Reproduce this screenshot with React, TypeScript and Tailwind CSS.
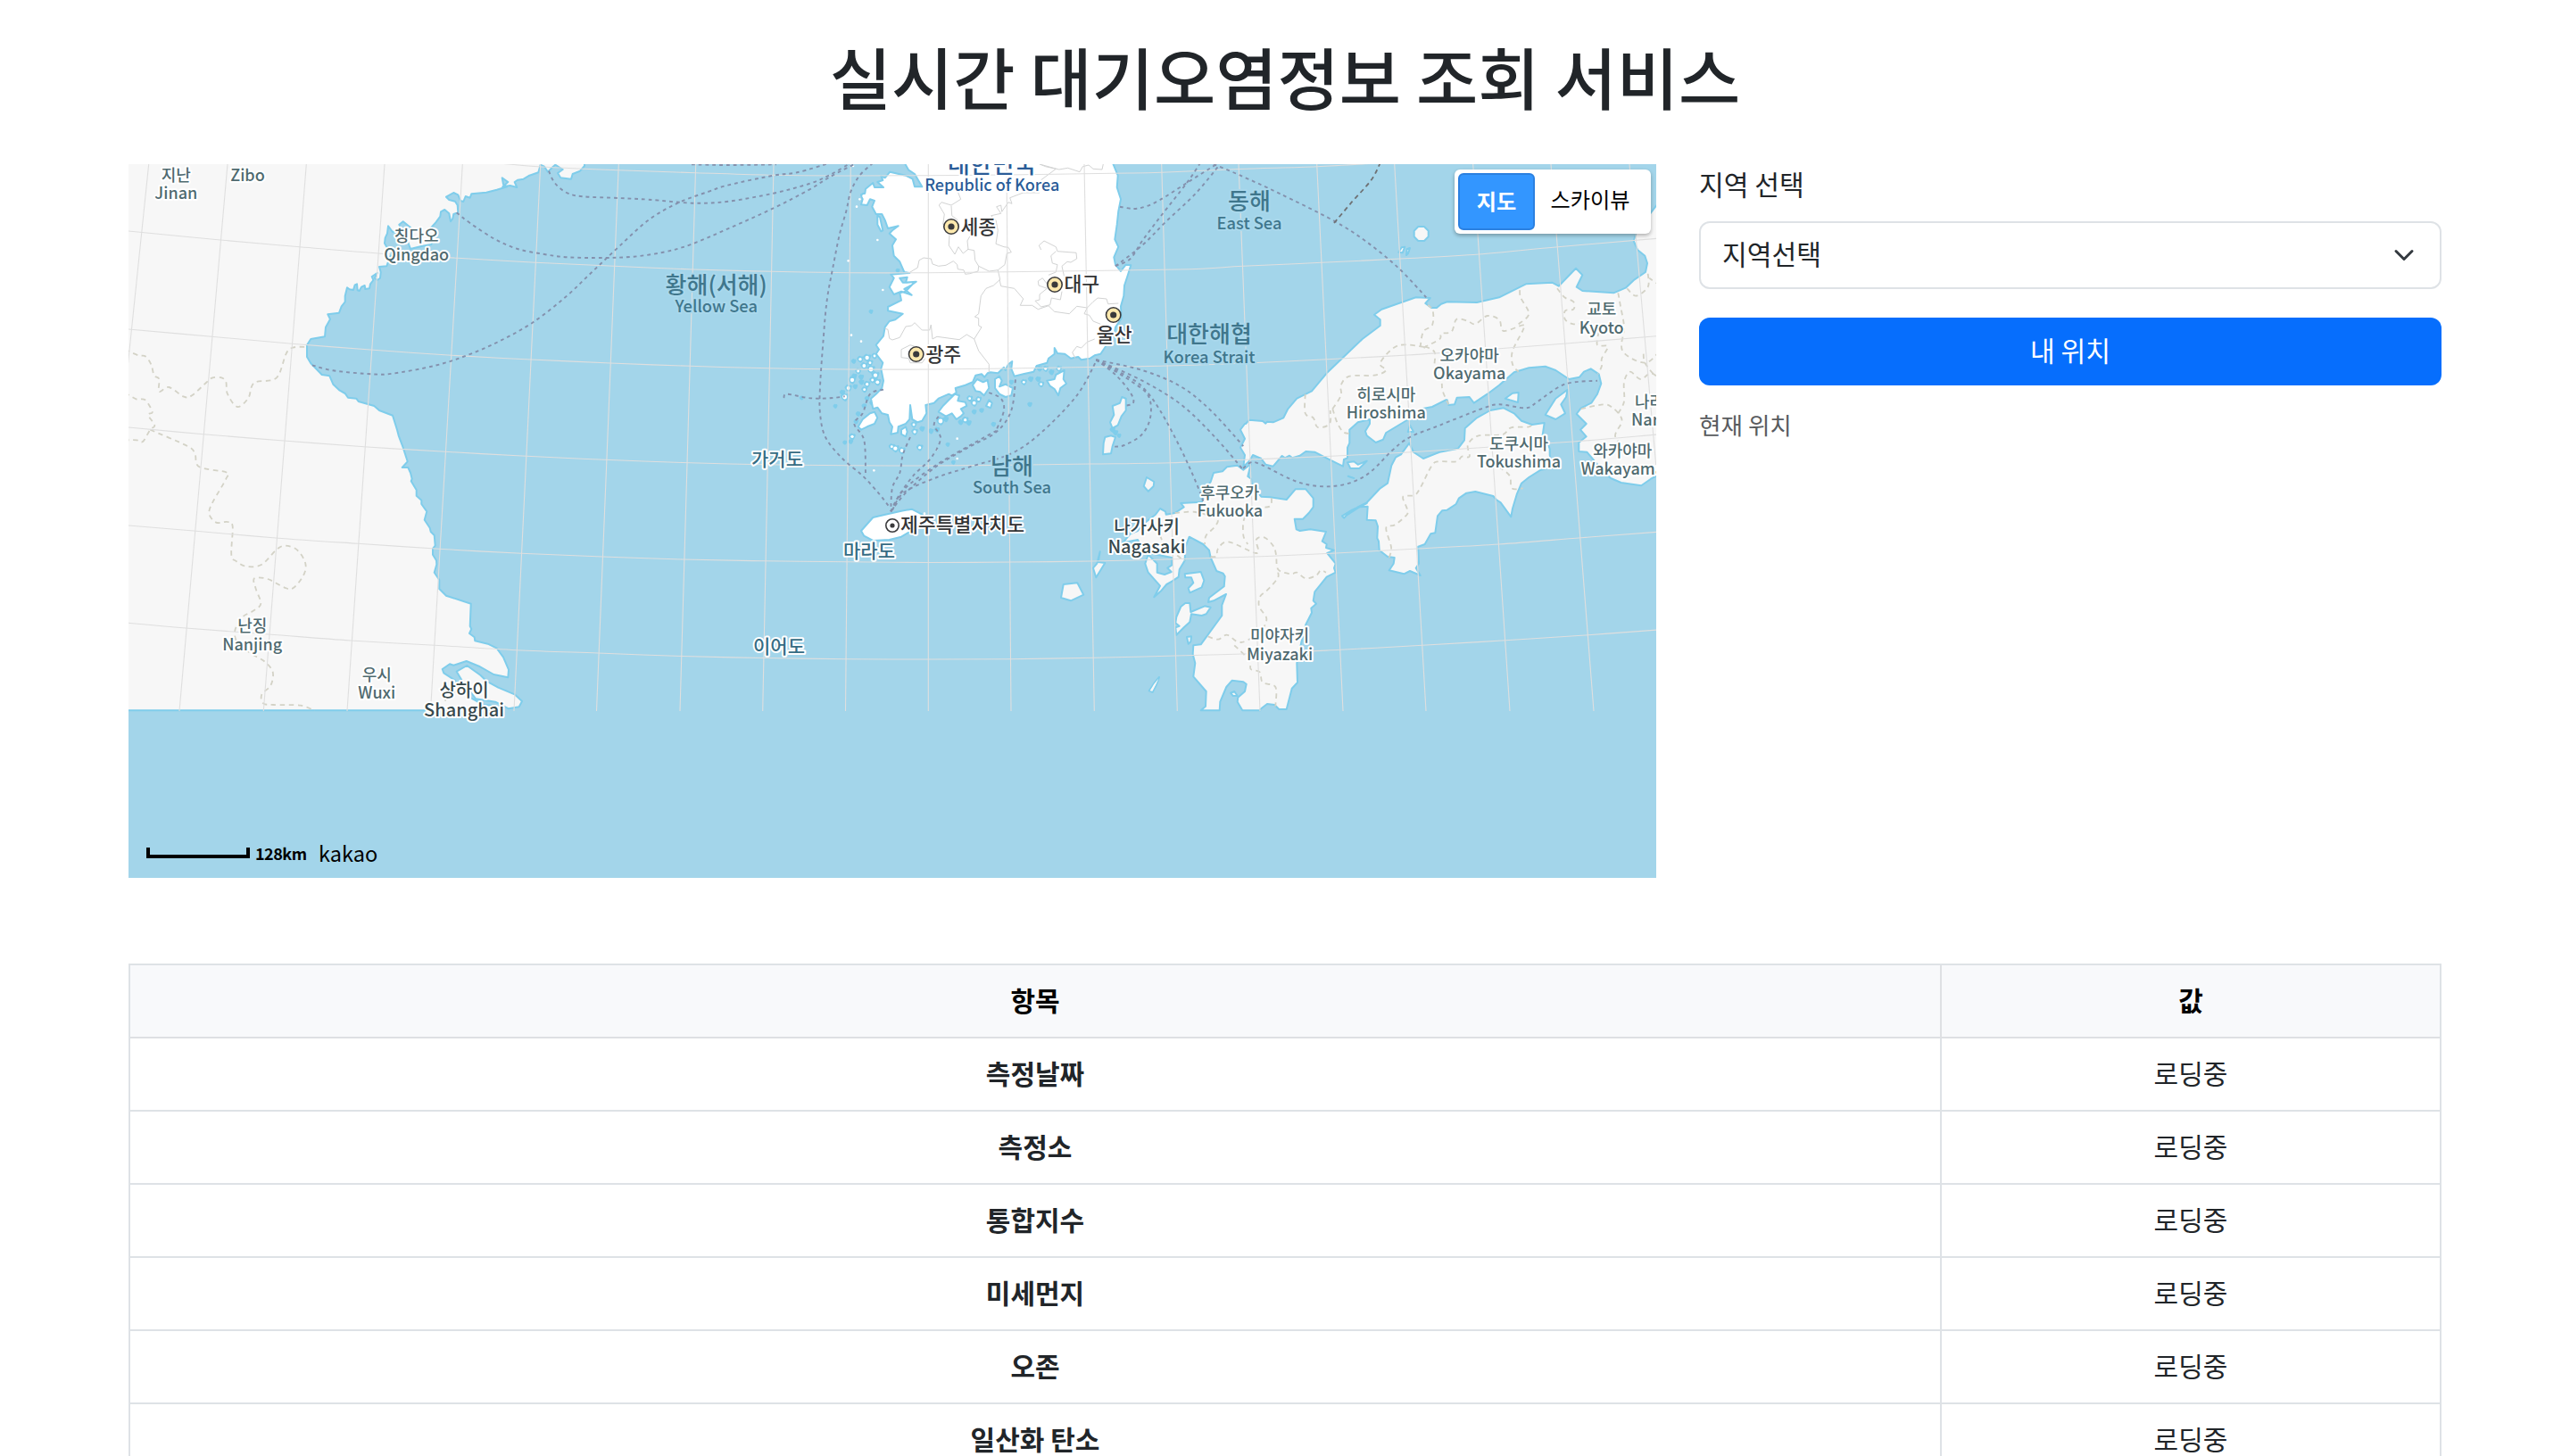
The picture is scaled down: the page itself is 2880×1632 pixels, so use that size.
import React from "react";

type Seg = [keyof typeof ORIGINS, string];
type Pt = [number, number];

// Origin of each map tile. Tile coordinates are stored at three units per pixel.
const ORIGINS = {
  A: [140, 180],
  B: [140, 560],
  C: [560, 180],
  D: [900, 180],
  E: [1280, 180],
  F: [1380, 460],
  G: [1480, 180],
  H: [1180, 560],
} as const;

const toPoints = (segs: Seg[]): Pt[] =>
  segs.flatMap(([tile, s]) => {
    const [ox, oy] = ORIGINS[tile];
    return s
      .trim()
      .split(/\s+/)
      .map((p) => {
        const [x, y] = p.split(",").map(Number);
        return [ox + x / 3, oy + y / 3] as Pt;
      });
  });

const f = (n: number) => n.toFixed(1);
const poly = (...segs: Seg[]) => toPoints(segs).map(([x, y]) => `${f(x)},${f(y)}`).join(" ");

const smoothPts = (p: Pt[]) => {
  let d = `M${f(p[0][0])} ${f(p[0][1])}`;
  for (let i = 0; i < p.length - 1; i++) {
    const a = p[i - 1] ?? p[i];
    const b = p[i];
    const c = p[i + 1];
    const e = p[i + 2] ?? c;
    d += `C${f(b[0] + (c[0] - a[0]) / 6)} ${f(b[1] + (c[1] - a[1]) / 6)} ${f(c[0] - (e[0] - b[0]) / 6)} ${f(c[1] - (e[1] - b[1]) / 6)} ${f(c[0])} ${f(c[1])}`;
  }
  return d;
};
const smooth = (...segs: Seg[]) => smoothPts(toPoints(segs));

const FOREIGN_LAND = [
  poly(
    ["C", "285,6 285,18 270,35 245,45 240,62 205,58 195,42 212,30 187,14 178,22 162,38 150,20 137,14 130,40 100,50 80,62 60,65 50,72 58,90 35,84 10,88 28,72 8,58 12,80"],
    ["A", "1285,88 1250,98 1215,107 1165,112 1160,125 1145,120 1138,138 1128,135 1120,115 1105,108 1080,122 1090,132 1110,137 1118,150 1120,175 1105,180 1102,195 1095,205 1090,178 1075,165 1062,172 1060,188 1045,208 1030,225 1045,240 1030,282 1000,287 960,297 950,270 960,225 935,205 922,215 930,235 900,240 885,220 882,245 875,260 873,278 880,290 900,300 885,340 880,355 855,357 860,375 858,395 848,402 840,395 848,378 830,390 835,402 825,415 822,430 808,432 806,420 795,425 788,438 782,436 780,415 773,418 768,435 755,433 747,427 740,455 740,475 728,490 720,512 682,517 690,533 675,560 672,592 625,600 612,620 612,660 625,682 662,720 688,724 700,752 722,773 740,783 750,797 778,800 785,810 838,825 855,840 900,857 915,905 920,925 935,965 950,1012 932,1032 952,1032 960,1050 965,1070 962,1078 980,1108 980,1127 997,1142"],
    ["B", "997,15 1015,40 1007,68 1025,95 1028,108 1040,120 1043,155 1035,165 1035,185 1047,205 1048,218 1040,245 1057,270 1057,300 1080,323 1163,350 1160,425 1165,435 1158,450 1175,463 1177,475 1220,485 1250,500 1272,530 1290,572 1288,598 1240,588 1190,560 1148,543 1105,557 1092,553 1067,570 1072,583 1110,608 1165,668 1205,690 1230,692 1230,709 0,709 0,-1160"],
  ),
  poly(["B", "1150,558 1195,590 1215,610 1255,632 1310,655 1335,678 1325,697 1290,703 1245,680 1180,670 1140,620 1115,578"]),
  poly(
    ["E", "345,885 330,905 345,935 330,965 345,990 340,1030 360,1010 372,990 400,1002 415,1022 440,1028 470,993 480,1000 495,992 505,1000 530,992 550,978 580,980 625,1003 675,1028 678,1005 690,1000 690,965 697,950 697,905 725,880 765,870 765,885 750,910 755,925 785,948 810,938 820,915 895,870 940,835 975,828 1020,805"],
    ["G", "425,805 430,822 450,820 458,797 500,795 515,815 560,785 600,755 650,712 700,697 755,692 790,705 835,735 870,728 885,710 908,700 935,718 943,750 930,785 910,815 875,832 860,852 893,885 873,905 893,928 868,948 868,978 895,980"],
    ["F", "1225,175 1245,200 1275,228 1310,243 1378,253 1410,230 1440,215"],
    ["G", "1145,850 1145,130 1110,175 1060,245 1052,270 1065,300 1090,320 1098,345 1092,375 1055,400 1025,428 985,445 880,438 860,425 880,385 858,362 800,422 778,410 690,415 600,460 525,477 425,475 405,482 390,495 372,495 352,480 368,462 320,460 205,500 180,518 200,535 200,555 140,600 20,715"],
    ["E", "570,775 520,800 490,835 475,865 440,880 420,878 415,884 405,876 360,872 348,885"],
  ),
  poly(
    ["F", "598,110 570,148 552,158 538,185 525,245 500,262 455,310 425,325 458,323 455,368 485,370 492,390 490,430 495,440 497,470 525,492 548,495 545,515 530,538 580,550 600,540 635,555 620,530 630,515 628,458 650,450 670,415 685,412 693,355 708,337 725,335 755,315 765,295 790,278 820,273 880,288 890,300 905,310 940,358 945,330 960,280 975,245 1000,225 1040,200 1080,190 1070,150 1070,130 1060,100 1045,90 1052,42 1010,48 975,35 950,10 915,-8 870,0 825,25 785,60 783,100 762,128 700,140 645,162 612,140"],
  ),
  poly(["F", "455,312 405,335 372,355 378,362 388,352 425,328"]),
  poly(
    ["E", "230,1080 240,1050 270,1045 285,1030 320,1025 340,1040 365,1020 355,1062 366,1070 370,1095 400,1130 430,1132 485,1140 515,1105 550,1105 575,1135 575,1165 560,1185 540,1205 512,1205 518,1240 530,1245 565,1240 618,1248 605,1280 620,1290 618,1302 645,1310 622,1320 650,1355"],
    ["F", "345,530 350,545 320,560 280,610 275,640 285,650 268,665 270,680 250,720 235,780 220,850 222,915 203,935 185,1005 160,1005 145,990 120,987 97,1005"],
    ["H", "697,709 637,709 620,680 622,665 645,645 650,620 640,613 602,608 583,630 562,680 560,709 497,709 513,695 515,645 472,595 478,550 470,520 472,490 497,487 568,390 568,355 582,318 540,340 522,345 525,330 575,292 578,258 572,248 550,240 530,195 525,170 505,150 458,125 445,160 443,205 425,235 422,260 400,275 382,285 365,305 340,328 360,290 320,245 310,215 320,185 350,215 350,245 375,252 398,243 385,230 400,220 400,195 350,185 300,170 285,135 235,145 260,115 285,105 300,85 345,50 360,30 378,40 380,50 410,45 440,25 430,12 500,8"],
    ["E", "205,1138 195,1120"],
  ),
  poly(["G", "755,855 790,800 830,770 825,795 808,820 822,850 790,870"]),
  poly(["G", "620,800 645,782 665,780 663,813 635,805"]),
  poly(["G", "300,890 312,912 293,912"]),
  poly(["E", "690,1015 712,1012 725,1022 755,1010 730,1035 700,1035"]),
  poly(["E", "692,1061 712,1068 700,1064"]),
  poly(["H", "443,250 480,245 497,243 508,272 500,295 460,313 455,298 472,280 465,262 445,262"]),
  poly(["H", "430,360 445,348 460,348 463,378 510,358 530,362 515,385 500,390 465,385 460,412 440,430 415,455 412,430 425,425 412,415 415,395"]),
  poly(["H", "450,462 465,460 463,478 455,485"]),
  poly(["H", "35,285 82,280 103,320 60,340 27,330"]),
  poly(["H", "158,175 152,210 175,213 145,262 135,230 148,215"]),
  poly(["H", "357,597 348,622 335,647 323,643 338,620"]),
  poly(["H", "597,650 610,645 620,660 605,660"]),
  poly(["D", "1040,825 1065,815 1072,795 1085,800 1085,840 1070,860 1058,890 1040,900 1032,880 1045,855"]),
  poly(["D", "1015,930 1035,925 1050,930 1040,960 1035,985 1008,988 1010,950"]),
  poly(["D", "1155,1065 1180,1080 1178,1095 1160,1112 1145,1095"]),
  poly(["E", "928,222 948,222 962,236 962,256 948,270 928,270 914,256 914,236"]),
  poly(["E", "862,308 872,292 883,290 875,310"]),
  poly(["E", "888,318 890,298 900,294 894,312"]),
];

const KOREA_LAND = [
  poly(
    ["D", "340,6 355,32 375,45 385,62 400,88 375,88 368,62 345,50 292,38 275,58 262,52 268,66 250,72 270,90 240,90 235,75 210,95 208,110 195,115 200,130 195,148 215,150 225,130 240,135 232,155 245,180 265,180 275,200 285,228 320,220 300,235 290,245 312,265 300,285 305,320 325,340 340,375 358,378 295,383 305,395 290,425 305,450 330,440 365,452 340,432 362,420 380,407 335,410 325,395 350,392 345,410 375,408 345,440 325,445 330,470 285,492 285,505 335,515 310,535 290,540 275,560 270,590 245,620 255,635 245,650 268,680 262,700 270,740 265,765 245,785 228,800 235,835 250,830 265,850 285,855 290,880 300,895 295,920 318,915 320,895 345,885 358,870 360,822 367,870 385,880 400,875 415,850 412,822 440,815 455,800 490,785 500,790 515,780 512,765 545,755 570,745 580,722 600,718 610,728 620,715 630,712 655,715 675,695 680,705 690,685 703,675 700,700 710,725 740,718 775,710 785,690 820,680 825,665 845,650 845,630 855,648 880,650 900,665 925,660 935,670 965,665 980,655 1000,650 1010,635 1020,620 1045,590 1050,560 1070,530 1068,490 1078,455 1080,420 1090,390 1102,352 1085,350 1068,372 1050,350 1045,325 1060,290 1048,265 1055,215 1060,170 1068,130 1055,90 1058,50 1040,6"],
  ),
  poly(["D", "195,1245 235,1200 270,1192 330,1178 365,1172 400,1190 405,1215 380,1235 330,1265 290,1275 235,1278 205,1262"]),
  poly(["D", "185,895 200,870 225,850 240,845 250,865 240,885 215,895 195,905"]),
  poly(["D", "455,845 470,825 490,805 510,785 525,790 520,808 545,812 550,825 530,835 540,850 530,860 515,870 500,850 480,860"]),
  poly(["D", "570,755 585,735 605,745 620,738 625,765 608,790 595,778 580,775"]),
  poly(["D", "645,735 660,725 668,740 660,760 680,752 705,765 700,790 680,795 660,785 645,765"]),
  poly(["D", "820,740 845,735 850,720 878,705 875,735 885,750 865,765 858,790 845,768 830,758"]),
  poly(["D", "250,185 258,190 268,235 262,238 250,215"]),
  poly(["D", "330,905 345,895 350,912 345,928 330,920"]),
  poly(["D", "615,825 625,805 635,815 630,832"]),
];

// [x, y, radius] of the islets along the south-west coast, in tile D units.
const ISLETS: [number, number, number][] = [
  [215, 663, 9], [240, 657, 6], [192, 668, 7], [170, 675, 4], [205, 690, 8], [228, 702, 10], [185, 708, 6], [243, 722, 9],
  [165, 738, 9], [152, 765, 8], [140, 795, 10], [132, 780, 5], [196, 745, 5], [215, 752, 7], [250, 745, 8], [206, 770, 6],
  [233, 738, 6], [175, 760, 4], [178, 878, 4], [185, 852, 4], [165, 928, 7], [140, 948, 3], [160, 945, 4], [205, 825, 4],
  [375, 912, 7], [372, 888, 6], [392, 965, 7], [310, 968, 9], [332, 975, 8], [298, 962, 6], [400, 902, 5], [430, 910, 5], [462, 876, 10],
  [480, 870, 5], [545, 872, 7], [557, 882, 5], [640, 887, 4], [560, 800, 6], [575, 815, 8], [600, 840, 4], [742, 745, 6],
  [765, 735, 5], [800, 752, 6], [790, 735, 5], [762, 820, 4], [486, 955, 3], [505, 1015, 3], [575, 845, 4], [590, 803, 6], [815, 700, 6],
  [835, 712, 5], [795, 700, 5], [700, 745, 4], [860, 700, 6], [450, 905, 5], [232, 815, 5], [215, 800, 4], [228, 508, 3],
  [318, 370, 3], [108, 826, 3], [-5, 798, 3], [195, 728, 5], [225, 680, 6], [172, 725, 5], [1050, 915, 5], [1040, 905, 5], [1062, 925, 3], [530, 880, 5], [205, 120, 8],
];

const SPECKS: [number, number][] = [
  [180, 155], [190, 130], [250, 267], [152, 337], [162, 587], [195, 608], [268, 435], [238, 1042], [518, 935], [518, 1002], [448, 972], [408, 1187], [168, 18],
];

const PROVINCES_KR = [
  "485,95 518,100 530,130 498,150 465,140 457,150 475,180 470,215",
  "498,152 500,185 520,200",
  "492,250 490,285 510,315 522,290 538,312 555,298 552,270 560,255",
  "552,298 575,302 578,335 590,355 588,372 560,380 545,382 540,368 520,365 518,350 505,338 480,352 455,355 435,348 430,330 405,327 390,335 385,360 355,378",
  "590,355 625,372 655,368 678,350 685,312 700,308 690,292 675,290 648,280 655,235 648,200 632,185 665,178 650,155 665,150 668,172 690,140 702,145 695,125 740,108 795,108",
  "655,368 662,400 640,420 615,430 598,455 590,515 577,525 590,530 590,555 600,560 575,600 550,585 525,602 450,592 435,600 430,552 425,570 400,570 375,545 365,555 345,558 325,595 300,603 290,598 285,568 275,565",
  "575,600 590,640 625,685 625,712",
  "660,400 665,422 710,430 740,465 730,487 770,487 790,500 825,488 845,508 895,515 920,490 955,495 975,475 990,462 1020,465 1025,482 1060,480",
  "800,300 793,285 810,270 850,290 855,305 918,310 920,330 900,342 888,340 870,355 880,400",
  "850,305 833,320 838,345 855,350 850,375 825,385",
  "820,415 805,395 790,405 792,420 820,430 795,450 795,468 780,472 800,492 830,485 835,462 865,468 870,440",
  "955,495 945,515 962,520 975,540 1000,550",
  "980,600 955,610 935,630 920,625 905,645 915,665",
  "375,625 360,620 330,635 330,662 355,665 360,680 400,680 410,665",
  "800,65 850,28 815,20 795,12 860,30 890,25 930,38 940,20 960,15 975,28 1005,30 1010,6",
].map((s) => poly(["D", s]));

const BORDERS: string[] = [
  smooth(["A", "0,635 45,655 68,658 88,685 98,722 115,735 115,777 148,762 198,794 225,790 275,745 295,730 325,730 340,745 345,785 378,828 415,798 435,747 510,730 550,637 615,627"]),
  smooth(["A", "0,780 38,802 68,805 92,845 78,855 100,890 85,905 60,945 40,940 0,940"]),
  smooth(
    ["A", "85,905 210,960 235,985 250,1030 340,1048 340,1070 297,1145"],
    ["B", "283,40 290,62 310,78 345,75 362,90 358,185 375,208 410,225 460,218 510,168 540,155 580,170 607,215 600,255 565,298 535,295 480,267 435,265 440,300 457,350 430,375 395,395 370,440 378,480 420,515 470,545 497,580 490,625 460,655 465,685 500,690 590,692 638,710"],
  ),
  smooth(["B", "1110,645 1080,670 1075,690"]),
  smooth(["E", "548,785 548,850 575,865 590,897 630,885 632,840"]),
  smooth(["E", "640,835 655,880 675,912 697,918"]),
  smooth(
    ["E", "640,835 668,790 668,755 697,725 780,722 820,705 800,680 860,622 950,627"],
    ["G", "350,627 400,600 405,582 440,575 457,533 495,540 520,550 560,522 600,535 615,573 680,553 680,570 645,640 645,685 665,710"],
  ),
  smooth(["G", "665,550 700,515 672,460 670,430"]),
  smooth(["G", "360,485 377,505 375,553 345,575 335,625"]),
  smooth(["G", "350,625 383,645 383,700 405,740 410,775 430,820"]),
  smooth(["G", "795,430 820,460 850,475 850,500 822,505 822,535 850,550 885,545"]),
  smooth(["G", "1000,445 1008,490 1020,560 1015,640 1090,680 1140,640"]),
  smooth(["G", "935,575 930,620 965,625 945,665 945,690 932,718"]),
  smooth(["G", "875,835 950,820 980,830 1005,855 1012,880 990,925 1015,960 1040,970"]),
  smooth(["G", "1100,380 1100,425 1060,455 1030,430"]),
  smooth(["G", "1000,850 1020,810 1020,745 1040,710 1075,735 1110,715 1140,735"]),
  smooth(["G", "1085,650 1090,680 1120,720"]),
  smooth(["G", "1140,420 1105,395"]),
  smooth(["F", "530,495 537,460 520,395 550,385 590,350 590,330 577,290 615,285 635,260 672,188 695,172 755,172 775,155 800,155 795,115 830,85 910,82 940,58 1000,55 1010,45"]),
  smooth(["F", "900,190 935,220 943,262 980,262"]),
  smooth(["H", "410,45 480,42 550,65 545,90 515,120 510,150"]),
  smooth(["H", "735,-5 730,22 690,30 645,60 640,120 655,150"]),
  smooth(["H", "530,192 550,190 555,165 590,142 685,180 683,135 710,127 740,155 750,185 757,235 800,250 820,245 850,265 885,255 900,238 918,245"]),
  smooth(["H", "757,245 755,265 720,305 697,325 693,360 718,400 700,440 650,475 620,478 585,455 555,470 520,460"]),
  smooth(["H", "610,490 660,540 665,570 695,580 705,615 748,630 748,695"]),
  smooth(["H", "360,120 375,150 420,190 445,205"]),
];

const ROUTES: string[] = [
  smooth(["C", "-145,175 -100,210 -20,262 60,297 150,315 230,325 350,327 450,323 550,308 640,283 770,228 920,160 1040,98 1110,55 1200,8"]),
  smooth(["C", "-630,688 -560,706 -430,718 -360,716 -220,690 -110,655 0,607 110,545 220,460 310,375 400,290 500,200 600,142 700,105 770,82 920,50 1000,40 1110,8"]),
  smooth(["C", "165,35 185,75 225,108 280,121 400,126 500,131 650,143 770,137 920,110 1040,78 1110,48 1180,8"]),
  smooth(["C", "645,13 770,15 930,13"]),
  smooth(["D", "235,8 190,50 160,105 145,170 122,250 100,360 80,470 68,600 57,760 57,850 75,930 130,1000 200,1060 255,1120 290,1165"]),
  smooth(["C", "955,798 965,785 1030,797 1075,800 1120,798 1160,793"]),
  smooth(["D", "270,770 225,785 200,850 172,885 205,940 210,1050"]),
  smooth(["D", "360,930 335,990 325,1050 300,1100 295,1180"]),
  smooth(["D", "455,860 440,890 462,935 430,1000 370,1060 320,1130 295,1180"]),
  smooth(["D", "295,1180 350,1112 450,1027 560,962 650,912 700,840 715,725"]),
  smooth(["D", "295,1180 340,1105 450,1022 560,958 650,908"]),
  smooth(["D", "625,780 665,800 675,840 650,905"]),
  smooth(["D", "300,1175 340,1115 450,1065 560,1030 700,985 800,915 920,790 985,675"]),
  smooth(["D", "985,670 1050,720 1100,780 1110,815 1080,825"]),
  smooth(["D", "985,670 1100,740 1160,790 1168,860 1140,920 1080,957 1040,962"]),
  smooth(["E", "-155,670 -60,720 0,760 60,840 130,970 180,1080 205,1145"]),
  smooth(["E", "-155,670 0,740 130,820 240,925 340,1040"]),
  smooth(["E", "-155,670 0,705 130,760 230,840 340,960"]),
  smooth(
    ["E", "340,1035 365,1015 400,1022 500,1072 570,1092 640,1095 710,1080 770,1045 840,975 900,930 1000,890 1140,835"],
    ["G", "600,820 690,832 730,810 820,752 930,740"],
  ),
  smooth(["E", "-75,155 -30,162 10,155 60,132 150,75 250,12"]),
  smooth(["E", "-90,355 -40,330 0,270 60,190 150,75 195,8"]),
  smooth(["E", "-90,355 0,285 80,205 180,110 260,14"]),
  smooth(["E", "240,12 330,50 460,110 640,200 750,270 860,360 955,460"]),
];

const MERIDIANS: [number, number][] = [
  [166.7, 103], [255, 201], [343.3, 295.3], [431, 389], [518.3, 482.5], [605.7, 576], [693.3, 668.5], [779.7, 762], [867, 854.7],
  [953.3, 947.5], [1040.3, 1040.3], [1128, 1133], [1215, 1226.3], [1301.7, 1319.3], [1388, 1412], [1475.7, 1505], [1562.7, 1598],
  [1650.7, 1692], [1738, 1786], [1826, 1880],
];

const PARALLELS: Pt[][] = [
  [[560, 183], [607, 187], [693, 190.7], [780, 193.7], [867, 196.3], [953, 197], [1040, 196.7], [1128, 196], [1247, 194.3], [1302, 193.3], [1388, 189.5], [1476, 186.7], [1560, 182]],
  [[144, 259], [247, 269], [336, 276.7], [424, 284], [513, 289.3], [600, 294.3], [688, 298.3], [777, 302], [865, 304.3], [953, 305.7], [1040, 305.7], [1129, 304.7], [1320, 302], [1393, 298.3], [1481, 294.3], [1569, 290], [1657, 285], [1746, 276.7], [1857, 267.3]],
  [[144, 369], [237, 377.3], [327, 385.3], [415, 392], [506, 398.3], [595, 403], [684, 407], [773, 410.3], [862, 412.7], [952, 414], [1040, 414], [1130, 413], [1218, 411.5], [1308, 410], [1398, 407], [1487, 402.7], [1577, 398], [1667, 391.7], [1755, 385], [1857, 376.7]],
  [[144, 479], [228, 486.7], [318, 494], [408, 500.7], [499, 506.3], [580, 510.7], [671, 515], [765, 518.5], [857, 520.8], [950, 521.7], [1040, 522], [1131, 521.3], [1222, 520], [1312, 518.7], [1402, 515], [1492, 511.3], [1582, 506.7], [1671, 501], [1763, 495], [1857, 487]],
  [[144, 589], [217, 595], [309, 603], [401, 609.3], [492, 615.3], [584, 620.3], [675, 624], [765, 627], [857, 628.8], [950, 629.8], [1040, 630.5], [1132, 630], [1223, 629], [1315, 626.7], [1406, 624], [1497, 620], [1589, 615], [1680, 610], [1772, 602.7], [1857, 596.3]],
  [[144, 698.3], [208, 704], [301, 711], [393, 718], [487, 723.3], [579, 728.7], [670, 732], [765, 735.5], [857, 737.5], [950, 738.8], [1040, 739], [1132, 738.7], [1226, 737.3], [1317, 735], [1410, 732.5], [1502, 728.3], [1594, 723.3], [1687, 717.7], [1780, 711.7], [1857, 706]],
];

type Label = { x: number; y?: number; ko?: string; ey?: number; en?: string };

const CITIES: Label[] = [
  { x: 197.3, y: 203, ko: "지난", ey: 222.5, en: "Jinan" },
  { x: 277.5, ey: 202.8, en: "Zibo" },
  { x: 466.7, y: 271.3, ko: "칭다오", ey: 291.5, en: "Qingdao" },
  { x: 282.7, y: 708, ko: "난징", ey: 728.5, en: "Nanjing" },
  { x: 422.3, y: 763, ko: "우시", ey: 783, en: "Wuxi" },
  { x: 1378.3, y: 558.5, ko: "후쿠오카", ey: 578.7, en: "Fukuoka" },
  { x: 1553.3, y: 449, ko: "히로시마", ey: 469, en: "Hiroshima" },
  { x: 1646.7, y: 405, ko: "오카야마", ey: 425, en: "Okayama" },
  { x: 1794.7, y: 352.7, ko: "교토", ey: 373.7, en: "Kyoto" },
  { x: 1702, y: 504, ko: "도쿠시마", ey: 524, en: "Tokushima" },
  { x: 1818.3, y: 512.3, ko: "와카야마", ey: 532.3, en: "Wakayama" },
  { x: 1848.5, y: 457, ko: "나라", ey: 477.3, en: "Nara" },
  { x: 1434, y: 719, ko: "미야자키", ey: 740, en: "Miyazaki" },
];

const BIG_CITIES: Label[] = [
  { x: 520, y: 781, ko: "상하이", ey: 803, en: "Shanghai" },
  { x: 1285, y: 598, ko: "나가사키", ey: 620, en: "Nagasaki" },
];

const SEAS: Label[] = [
  { x: 802.7, y: 328.5, ko: "황해(서해)", ey: 350, en: "Yellow Sea" },
  { x: 1400, y: 235, ko: "동해", ey: 256.5, en: "East Sea" },
  { x: 1355, y: 384.3, ko: "대한해협", ey: 406.5, en: "Korea Strait" },
  { x: 1134, y: 532, ko: "남해", ey: 553.3, en: "South Sea" },
];

const ISLANDS: Label[] = [
  { x: 974, y: 625, ko: "마라도" },
  { x: 871, y: 521.5, ko: "가거도" },
  { x: 873, y: 731.5, ko: "이어도" },
];

const MARKERS: { cx: number; cy: number; x: number; y: number; name: string; middle?: boolean; plain?: boolean }[] = [
  { cx: 1066, cy: 254, x: 1076.5, y: 261.5, name: "세종" },
  { cx: 1182, cy: 319, x: 1192.5, y: 326.3, name: "대구" },
  { cx: 1247.7, cy: 353, x: 1248.7, y: 382.8, name: "울산", middle: true },
  { cx: 1026.7, cy: 397, x: 1037.5, y: 404.7, name: "광주" },
  { cx: 1000, cy: 589, x: 1009, y: 596, name: "제주특별자치도", plain: true },
];

function Labels({ items, koSize, enSize, fill, halo }: { items: Label[]; koSize: number; enSize: number; fill: string; halo: string }) {
  return (
    <g fill={fill} stroke={halo} strokeWidth={4} strokeLinejoin="round" paintOrder="stroke" textAnchor="middle">
      {items.map((l) => (
        <g key={l.en ?? l.ko}>
          {l.ko && <text x={l.x} y={l.y} fontSize={koSize}>{l.ko}</text>}
          {l.en && <text x={l.x} y={l.ey} fontSize={enSize}>{l.en}</text>}
        </g>
      ))}
    </g>
  );
}

function MapDrawing() {
  return (
    <svg className="block h-full w-full font-medium" viewBox="144 184 1712 800" aria-label="지도">
      <g strokeLinejoin="round" stroke="#7fcdeb" strokeWidth={2}>
        <g fill="#f7f7f7">{FOREIGN_LAND.map((p) => <polygon key={p} points={p} />)}</g>
        <g strokeWidth={3}>
          {ISLETS.map(([x, y, r]) => {
            const d = `${x - r},${y - r * 0.3} ${x - r * 0.3},${y - r} ${x + r * 0.2},${y - r * 0.5} ${x + r},${y - r * 0.7} ${x + r * 0.6},${y + r * 0.4} ${x + r * 0.2},${y + r} ${x - r * 0.5},${y + r * 0.5}`;
            return <polygon key={d} points={poly(["D", d])} fill="#fff" />;
          })}
        </g>
        <g fill="#fff">{KOREA_LAND.map((p) => <polygon key={p} points={p} />)}</g>
      </g>
      <g fill="#fff">
        {SPECKS.map(([x, y]) => <circle key={`${x}-${y}`} cx={900 + x / 3} cy={180 + y / 3} r={1.3} />)}
        {ISLETS.filter(([, , r]) => r > 5).map(([x, y, r]) => (
          <circle key={`${x}-${y}`} cx={900 + x / 3} cy={180 + y / 3} r={r / 4.2} />
        ))}
        <polygon points={poly(["H", "355,602 346,622 334,644 326,643 340,620"])} fill="#f7f7f7" />
      </g>
      <g fill="none" stroke="#d2d3d3" strokeWidth={1}>{PROVINCES_KR.map((p) => <polyline key={p} points={p} />)}</g>
      <g fill="none" stroke="#d3d2c6" strokeWidth={1.8} strokeDasharray="5.5 4.5">{BORDERS.map((d) => <path key={d} d={d} />)}</g>
      <g fill="none" stroke="#dfdfdf" strokeWidth={1.1}>
        {MERIDIANS.map(([a, b]) => <line key={a} x1={a} y1={184} x2={b} y2={797} />)}
        {PARALLELS.map((p) => <path key={p[0][1]} d={smoothPts(p)} />)}
      </g>
      <g fill="none" stroke="#8491ad" strokeWidth={1.9} strokeDasharray="3.8 4">{ROUTES.map((d) => <path key={d} d={d} />)}</g>
      <path d={smooth(["E", "645,210 700,145 770,65 800,8"])} fill="none" stroke="#6f7275" strokeWidth={1.8} strokeDasharray="5 4" />

      <Labels items={CITIES} koSize={18} enSize={18} fill="#4f6a6f" halo="#ffffff" />
      <Labels items={BIG_CITIES} koSize={20} enSize={20} fill="#37494d" halo="#ffffff" />
      <Labels items={SEAS} koSize={26} enSize={18.3} fill="#3f768c" halo="#a9d8ec" />
      <Labels items={ISLANDS} koSize={21} enSize={18} fill="#356c84" halo="#ffffff" />
      <Labels items={[{ x: 1111.7, y: 193.7, ko: "대한민국", ey: 214, en: "Republic of Korea" }]} koSize={27} enSize={18} fill="#2a5c98" halo="#ffffff" />

      {MARKERS.map((m) => (
        <g key={m.name}>
          <circle cx={m.cx} cy={m.cy} r={m.plain ? 7.2 : 8.2} fill={m.plain ? "#fff" : "#fde9ae"} stroke="#3a3a3c" strokeWidth={1.6} />
          <circle cx={m.cx} cy={m.cy} r={m.plain ? 2.6 : 3.6} fill="#3a3a3c" />
          <text x={m.x} y={m.y} fontSize={21.6} textAnchor={m.middle ? "middle" : "start"} fill="#333436" stroke="#fff" strokeWidth={4} strokeLinejoin="round" paintOrder="stroke">
            {m.name}
          </text>
        </g>
      ))}
    </svg>
  );
}

function MapPanel() {
  return (
    <section className="relative h-[800px] w-[1712px] shrink-0 overflow-hidden bg-[#a3d5ea]">
      <MapDrawing />
      <div className="absolute top-[6px] right-[6px] flex h-[72px] w-[220px] rounded-[6px] bg-white p-1 text-[24.2px] leading-none text-black shadow-[0_2px_4px_rgba(0,0,0,0.3)]">
        <button className="flex h-16 w-[86px] items-center justify-center rounded-[6px] border-2 border-[#2b80e0] bg-[#3396ff] pb-[2px] font-bold text-white">지도</button>
        <button className="flex h-16 flex-1 items-center justify-center pr-[2px] pb-[5px]">스카이뷰</button>
      </div>
      <div className="absolute bottom-3 left-5 flex h-8 items-end text-black">
        <div className="mb-[10px] h-3 w-[116px] border-4 border-t-0 border-black" />
        <span className="ml-[6px] w-[66px] text-[18px] leading-8 font-bold tracking-[-0.5px] whitespace-nowrap">128km</span>
        <span className="pl-[5px] text-[23.5px] leading-8">kakao</span>
      </div>
    </section>
  );
}

function Controls() {
  return (
    <aside className="flex w-[832px] shrink-0 flex-col">
      <label className="mb-4 h-12 text-[30.2px] leading-[44px]">지역 선택</label>
      <button className="flex h-[76px] items-center justify-between rounded-[12px] border-2 border-[#dee2e6] bg-white pr-6 pl-6 text-left text-[30.2px] leading-[48px]">
        <span className="pb-1">지역선택</span>
        <svg className="h-6 w-8" viewBox="0 0 16 16" fill="none" stroke="#343a40" strokeWidth={2} strokeLinecap="round" strokeLinejoin="round">
          <path d="m2 5 6 6 6-6" />
        </svg>
      </button>
      <button className="mt-8 flex h-[76px] items-center justify-center rounded-[12px] bg-[#066efd] pb-1 text-[30.2px] leading-[48px] text-white">내 위치</button>
      <p className="mt-[23px] text-[26.6px] leading-[42px] text-[#595c5f]">현재 위치</p>
    </aside>
  );
}

const ROWS = ["측정날짜", "측정소", "통합지수", "미세먼지", "오존", "일산화 탄소"];

export default function App() {
  return (
    <main className="h-[1632px] w-[2880px] overflow-hidden bg-white px-[144px] font-['Noto_Sans_CJK_KR',sans-serif] text-[#212529]">
      <h1 className="flex h-[184px] items-center justify-center pb-[14px] text-[75.3px] leading-[96px] font-medium">실시간 대기오염정보 조회 서비스</h1>
      <div className="flex gap-12">
        <MapPanel />
        <Controls />
      </div>
      <div className="mt-24 w-full border-2 border-b-0 border-[#dee2e6] text-center text-[30px] leading-[77px]">
        <div className="flex h-[82px] border-b-2 border-[#dee0e3] bg-[#f8f9fb] font-bold text-black">
          <div className="w-[2030px] border-r-2 border-[#dee0e3]">항목</div>
          <div className="flex-1">값</div>
        </div>
        {ROWS.map((name) => (
          <div key={name} className="flex h-[82px] border-b-2 border-[#dee2e6]">
            <div className="w-[2030px] border-r-2 border-[#dee2e6] font-bold">{name}</div>
            <div className="flex-1">로딩중</div>
          </div>
        ))}
      </div>
    </main>
  );
}
